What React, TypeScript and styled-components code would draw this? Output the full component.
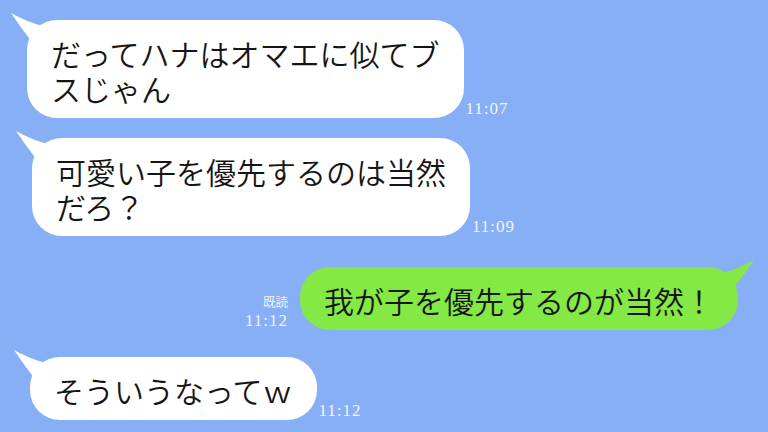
import React from "react"
import styled, { createGlobalStyle } from "styled-components"

const palette = {
  sky: "#87aff5",
  white: "#ffffff",
  lime: "#84e845",
  ink: "#151515",
  meta: "#f0f4fd",
}

const GlobalStyle = createGlobalStyle`
  html, body {
    margin: 0;
    padding: 0;
    background: ${palette.sky};
  }
  #root {
    width: 768px;
    height: 432px;
    overflow: hidden;
  }
`

const ChatScreen = styled.div`
  width: 768px;
  height: 432px;
  background: ${palette.sky};
  display: flex;
  flex-direction: column;
  font-family: "Noto Sans CJK JP", "Noto Sans", sans-serif;
  overflow: hidden;
`

const Row = styled.div<{ $mine?: boolean; $top: number; $indent: number }>`
  display: flex;
  align-items: flex-end;
  justify-content: ${(p) => (p.$mine ? "flex-end" : "flex-start")};
  margin-top: ${(p) => p.$top}px;
  padding-left: ${(p) => (p.$mine ? 0 : p.$indent)}px;
  padding-right: ${(p) => (p.$mine ? p.$indent : 0)}px;
  gap: ${(p) => (p.$mine ? 12 : 2)}px;
`

const Bubble = styled.div<{ $mine?: boolean }>`
  position: relative;
  background: ${(p) => (p.$mine ? palette.lime : palette.white)};
  color: ${palette.ink};
  border-radius: 30px;
  padding: 16px 24px 12px;
  font-size: 30px;
  font-weight: 350;
  line-height: 35px;
  white-space: pre-line;
  letter-spacing: 0;
`

const Tail = styled.svg<{ $mine?: boolean }>`
  position: absolute;
  top: -8px;
  width: 35px;
  height: 35px;
  ${(p) => (p.$mine ? "right: -17px; transform: scaleX(-1);" : "left: -17px;")}
`

const Meta = styled.div<{ $mine?: boolean }>`
  display: flex;
  flex-direction: column;
  align-items: ${(p) => (p.$mine ? "flex-end" : "flex-start")};
  color: ${palette.meta};
  margin-bottom: 1px;
`

const ReadMark = styled.span`
  font-family: "Noto Sans CJK JP", sans-serif;
  font-size: 12.5px;
  line-height: 15px;
  margin-bottom: 3px;
`

const Time = styled.span`
  font-family: "Liberation Serif", "DejaVu Serif", serif;
  font-size: 17px;
  line-height: 17px;
  letter-spacing: 1px;
`

type Message = {
  text: string
  time: string
  mine?: boolean
  top: number
  indent: number
}

const messages: Message[] = [
  { text: "だってハナはオマエに似てブ\nスじゃん", time: "11:07", top: 20, indent: 27 },
  { text: "可愛い子を優先するのは当然\nだろ？", time: "11:09", top: 20, indent: 32 },
  { text: "我が子を優先するのが当然！", time: "11:12", mine: true, top: 31, indent: 30 },
  { text: "そういうなってｗ", time: "11:12", top: 27, indent: 30 },
]

const BubbleTail: React.FC<{ mine?: boolean }> = ({ mine }) => (
  <Tail $mine={mine} viewBox="0 0 35 35">
    <path
      d="M1 1 Q17 10 33 14 L33 35 L22 30 Q11 16 1 1 Z"
      fill={mine ? palette.lime : palette.white}
    />
  </Tail>
)

const ChatRow: React.FC<{ msg: Message }> = ({ msg }) => {
  const bubble = (
    <Bubble $mine={msg.mine}>
      <BubbleTail mine={msg.mine} />
      {msg.text}
    </Bubble>
  )
  return (
    <Row $mine={msg.mine} $top={msg.top} $indent={msg.indent}>
      {msg.mine ? (
        <>
          <Meta $mine>
            <ReadMark>既読</ReadMark>
            <Time>{msg.time}</Time>
          </Meta>
          {bubble}
        </>
      ) : (
        <>
          {bubble}
          <Meta>
            <Time>{msg.time}</Time>
          </Meta>
        </>
      )}
    </Row>
  )
}

export default function App() {
  return (
    <>
      <GlobalStyle />
      <ChatScreen>
        {messages.map((m, i) => (
          <ChatRow key={i} msg={m} />
        ))}
      </ChatScreen>
    </>
  )
}
